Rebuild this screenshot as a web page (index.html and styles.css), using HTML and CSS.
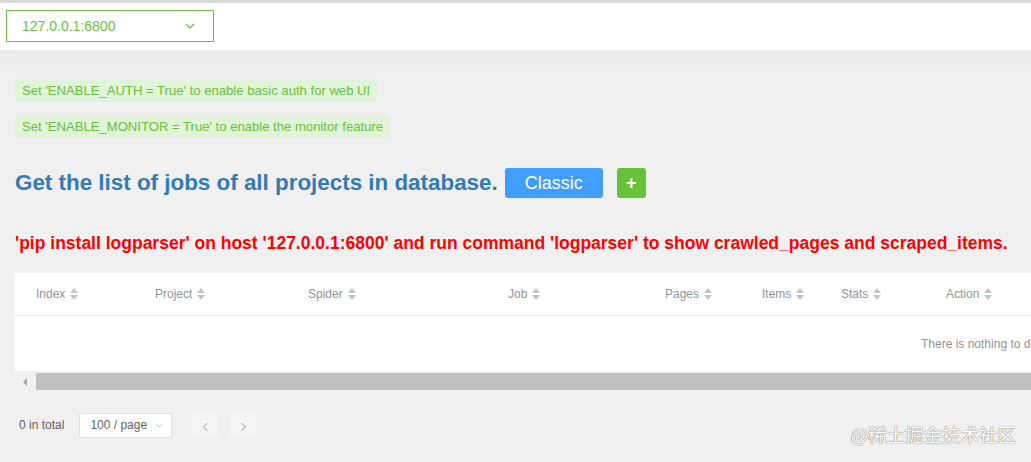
FILE: index.html
```html
<!DOCTYPE html>
<html lang="en">
<head>
    <meta charset="UTF-8">
    <title>Jobs</title>
    <link rel="stylesheet" href="styles.css">
</head>
<body>
    <!-- Node selector -->
    <div class="topbar">
        <div class="node-select">
            <span>127.0.0.1:6800</span>
            <svg class="chevron" width="10" height="6" viewBox="0 0 10 6"><path d="M1 1l4 4 4-4" fill="none" stroke="#67c23a" stroke-width="1.2"/></svg>
        </div>
    </div>

    <div class="main">
        <div class="tips">
            <div class="tag">Set 'ENABLE_AUTH = True' to enable basic auth for web UI</div>
            <div class="tag">Set 'ENABLE_MONITOR = True' to enable the monitor feature</div>
        </div>

        <div class="title-row">
            <h2>Get the list of jobs of all projects in database.</h2>
            <button class="btn-primary">Classic</button>
            <button class="btn-success">+</button>
        </div>

        <p class="warning">'pip install logparser' on host '127.0.0.1:6800' and run command 'logparser' to show crawled_pages and scraped_items.</p>

        <!-- Jobs table -->
        <div class="table">
            <div class="thead">
                <div class="th w-index">Index <i class="sort"></i></div>
                <div class="th w-project">Project <i class="sort"></i></div>
                <div class="th w-spider">Spider <i class="sort"></i></div>
                <div class="th w-job">Job <i class="sort"></i></div>
                <div class="th w-pages">Pages <i class="sort"></i></div>
                <div class="th w-items">Items <i class="sort"></i></div>
                <div class="th w-stats">Stats <i class="sort"></i></div>
                <div class="th w-action">Action <i class="sort"></i></div>
            </div>
            <div class="empty">There is nothing to display</div>
        </div>
        <div class="hscroll">
            <span class="arrow-left"></span>
            <div class="thumb"></div>
        </div>

        <div class="pagination">
            <span class="total">0 in total</span>
            <div class="sizes">100 / page
                <svg width="8" height="5" viewBox="0 0 8 5"><path d="M1 1l3 3 3-3" fill="none" stroke="#c0c4cc" stroke-width="1"/></svg>
            </div>
            <button class="pager">&lsaquo;</button>
            <button class="pager">&rsaquo;</button>
        </div>
    </div>

    <div class="watermark">@稀土掘金技术社区</div>
</body>
</html>
```

FILE: styles.css
```css
html, body {
    overflow: hidden;
}
body {
    margin: 0;
    font-family: "Liberation Sans", Arial, sans-serif;
    background-color: #f0f0f0;
    color: #606266;
    width: 1031px;
    height: 462px;
    position: relative;
}
.topbar {
    border-top: 3px solid #d9d9d9;
    background: #fff;
    height: 47px;
    display: flex;
    align-items: center;
    padding-left: 6px;
}
.node-select {
    width: 208px;
    height: 32px;
    border: 1px solid #67c23a;
    box-sizing: border-box;
    display: flex;
    align-items: center;
    justify-content: space-between;
    padding: 0 18px 0 15px;
    color: #67c23a;
    font-size: 14px;
    margin-top: -2px;
}
.main {
    background: linear-gradient(#e9eaec, #f0f0f0 22px);
    padding: 29px 0 0 15px;
}
.tips {
    display: flex;
    flex-direction: column;
    align-items: flex-start;
    gap: 13px;
}
.tag {
    background: #e1f3d8;
    color: #67c23a;
    font-size: 13.1px;
    height: 23px;
    line-height: 23px;
    padding: 0 7px;
    border-radius: 2px;
}
.title-row {
    display: flex;
    align-items: center;
    margin-top: 30px;
}
.title-row h2 {
    margin: 0;
    font-size: 22.4px;
    color: #337ab7;
    font-weight: bold;
}
.title-row button {
    border: none;
    border-radius: 3px;
    color: #fff;
    height: 30px;
    font-family: inherit;
    cursor: pointer;
}
.btn-primary {
    background: #409eff;
    width: 98px;
    font-size: 18px;
    margin-left: 7px;
}
.btn-success {
    background: #67c23a;
    width: 29px;
    font-size: 18px;
    font-weight: bold;
    margin-left: 14px;
    padding: 0;
}
.warning {
    color: #f00;
    font-weight: bold;
    font-size: 17.5px;
    margin: 35px 0 0;
    white-space: nowrap;
}
.table {
    margin-top: 19px;
    background: #fff;
    width: 2000px;
}
.thead {
    display: flex;
    height: 42px;
    align-items: center;
    border-bottom: 1px solid #ebeef5;
}
.th {
    font-size: 12px;
    color: #909399;
    padding-left: 21px;
    box-sizing: border-box;
    display: flex;
    align-items: center;
}
.w-index { width: 119px; }
.w-project { width: 153px; }
.w-spider { width: 200px; }
.w-job { width: 157px; }
.w-pages { width: 97px; }
.w-items { width: 79px; }
.w-stats { width: 105px; }
.w-action { width: 120px; }
.sort {
    display: inline-block;
    width: 9px;
    height: 12px;
    margin-left: 5px;
    position: relative;
}
.sort::before, .sort::after {
    content: "";
    position: absolute;
    left: 0;
    border-left: 4.5px solid transparent;
    border-right: 4.5px solid transparent;
}
.sort::before {
    top: 0;
    border-bottom: 5px solid #c0c4cc;
}
.sort::after {
    bottom: 0;
    border-top: 5px solid #c0c4cc;
}
.empty {
    height: 55px;
    line-height: 56px;
    font-size: 12px;
    color: #909399;
    padding-left: 906px;
    white-space: nowrap;
    overflow: hidden;
    width: 110px;
}
.hscroll {
    display: flex;
    align-items: center;
    height: 17px;
    margin-top: 2px;
    background: #f1f1f1;
}
.arrow-left {
    width: 0;
    height: 0;
    border-top: 4px solid transparent;
    border-bottom: 4px solid transparent;
    border-right: 4px solid #a3a3a3;
    margin: 0 9px 0 8px;
}
.thumb {
    flex: 1;
    height: 17px;
    background: #c1c1c1;
}
.pagination {
    display: flex;
    align-items: center;
    margin-top: 22px;
    font-size: 12px;
}
.total {
    color: #606266;
    margin-left: 4px;
    margin-right: 15px;
}
.sizes {
    width: 93px;
    height: 25px;
    box-sizing: border-box;
    background: #fff;
    border: 1px solid #dcdfe6;
    border-radius: 2px;
    display: flex;
    align-items: center;
    justify-content: space-between;
    padding: 0 8px 0 10px;
    color: #606266;
    font-size: 12px;
}
.pager {
    width: 26px;
    height: 26px;
    border: none;
    background: #f4f4f5;
    color: #c0c4cc;
    font-size: 20px;
    line-height: 20px;
    padding: 0;
    margin-left: 12px;
    font-family: inherit;
}
.pager:first-of-type {
    margin-left: 20px;
}
.watermark {
    position: absolute;
    right: 15px;
    bottom: 15px;
    font-family: "Noto Sans CJK SC", sans-serif;
    font-size: 18.5px;
    color: #fff;
    text-shadow: 0 0 1px #777, 0 0 1px #777;
}
```
